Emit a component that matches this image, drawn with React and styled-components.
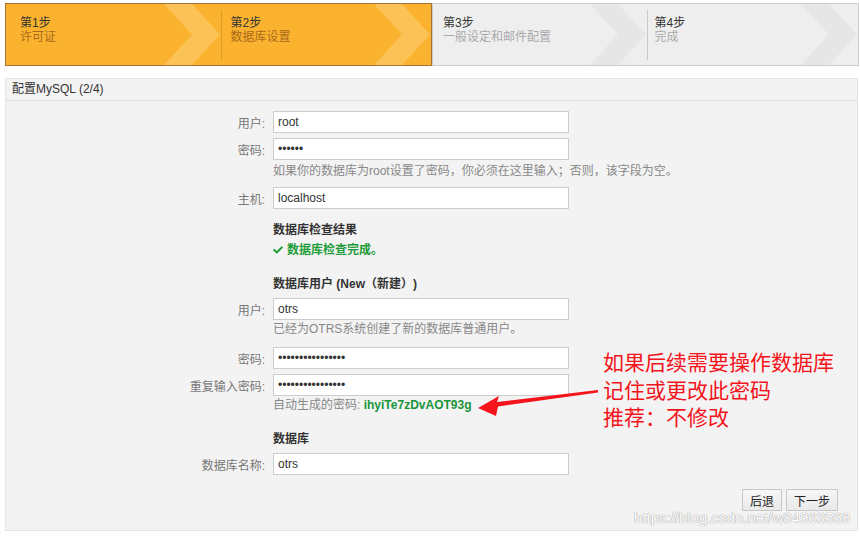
import React from "react";
import styled, { createGlobalStyle } from "styled-components";
import { FaCheck } from "react-icons/fa";

const GlobalStyle = createGlobalStyle`
  html, body {
    margin: 0;
    padding: 0;
    background: #fff;
  }
  body {
    font-family: "Liberation Sans", Arial, "Noto Sans CJK SC", sans-serif;
    font-size: 12px;
    color: #333;
    text-spacing-trim: space-all;
  }
`;

const steps = [
  { no: "第1步", name: "许可证", pad: 14 },
  { no: "第2步", name: "数据库设置", pad: 10, divider: true },
  { no: "第3步", name: "一般设定和邮件配置", pad: 10 },
  { no: "第4步", name: "完成", pad: 8, divider: true },
];

const Chevron = ({ color }) => (
  <ChevronSvg viewBox="0 0 56 61" preserveAspectRatio="none">
    <polygon points="0,0 28,0 56,30.5 28,61 0,61 28,30.5" fill={color} />
  </ChevronSvg>
);

const App = () => {
  const renderStep = (s, done) => (
    <Step key={s.no} $pad={s.pad} $divider={s.divider} $done={done}>
      <Chevron color={done ? "#fcc255" : "#e6e6e6"} />
      <StepNo>{s.no}</StepNo>
      <StepName $done={done}>{s.name}</StepName>
    </Step>
  );

  return (
    <Page>
      <GlobalStyle />
      <StepBar>
        <StepGroup $done>{steps.slice(0, 2).map((s) => renderStep(s, true))}</StepGroup>
        <StepGroup>{steps.slice(2).map((s) => renderStep(s, false))}</StepGroup>
      </StepBar>

      <Panel>
        <PanelHeader>配置MySQL (2/4)</PanelHeader>
        <PanelBody>
          <Row $mt={10}>
            <Label>用户:</Label>
            <Input readOnly value="root" />
          </Row>
          <Row $mt={5}>
            <Label>密码:</Label>
            <Input readOnly type="password" value="123456" />
          </Row>
          <Help $mt={3}>如果你的数据库为root设置了密码，你必须在这里输入；否则，该字段为空。</Help>
          <Row $mt={8}>
            <Label>主机:</Label>
            <Input readOnly value="localhost" />
          </Row>

          <Heading $mt={13}>数据库检查结果</Heading>
          <Success $mt={4}>
            <FaCheck size={10} />
            数据库检查完成。
          </Success>

          <Heading $mt={18}>数据库用户 (New（新建）)</Heading>
          <Row $mt={6}>
            <Label>用户:</Label>
            <Input readOnly value="otrs" />
          </Row>
          <Help $mt={1}>已经为OTRS系统创建了新的数据库普通用户。</Help>
          <Row $mt={10}>
            <Label>密码:</Label>
            <Input readOnly type="password" value="ihyiTe7zDvAOT93g" />
          </Row>
          <Row $mt={5}>
            <Label>重复输入密码:</Label>
            <Input readOnly type="password" value="ihyiTe7zDvAOT93g" />
          </Row>
          <Help $mt={1}>
            自动生成的密码: <Generated>ihyiTe7zDvAOT93g</Generated>
          </Help>

          <Heading $mt={18}>数据库</Heading>
          <Row $mt={6}>
            <Label>数据库名称:</Label>
            <Input readOnly value="otrs" />
          </Row>

          <Actions>
            <Button>后退</Button>
            <Button>下一步</Button>
          </Actions>
        </PanelBody>
        <Watermark>https://blog.csdn.net/w84963568</Watermark>
      </Panel>

      <Note>
        如果后续需要操作数据库
        <br />
        记住或更改此密码
        <br />
        推荐：不修改
      </Note>
      <ArrowSvg width="860" height="536" viewBox="0 0 860 536">
        <polygon
          points="478,408 499,396 497,402 598,390 598,392.5 498,406.5 496,416"
          fill="#f4141b"
        />
      </ArrowSvg>
    </Page>
  );
};

export default App;

const Page = styled.div`
  position: relative;
  width: 860px;
  height: 536px;
  overflow: hidden;
`;

const StepBar = styled.div`
  display: flex;
  height: 63px;
  margin: 3px 1px 0 5px;
`;

const StepGroup = styled.div`
  flex: 1;
  display: flex;
  background: ${(p) => (p.$done ? "#fbb32f" : "#eeeeee")};
  border: 1px solid ${(p) => (p.$done ? "#a3733a" : "#cccccc")};
`;

const Step = styled.div`
  position: relative;
  flex: 1;
  padding: 12px 0 0 ${(p) => p.$pad}px;

  &::before {
    content: "";
    display: ${(p) => (p.$divider ? "block" : "none")};
    position: absolute;
    left: 0;
    top: 6px;
    bottom: 5px;
    width: 1px;
    background: ${(p) => (p.$done ? "#dd9b27" : "#c9c9c9")};
  }
`;

const ChevronSvg = styled.svg`
  position: absolute;
  top: 0;
  right: 1px;
  width: 56px;
  height: 100%;
`;

const StepNo = styled.div`
  position: relative;
  line-height: 14px;
  color: #333;
`;

const StepName = styled.div`
  position: relative;
  line-height: 14px;
  color: ${(p) => (p.$done ? "#a9681a" : "#aaaaaa")};
`;

const Panel = styled.div`
  position: relative;
  margin: 12px 2px 0 5px;
  height: 453px;
  box-sizing: border-box;
  background: #f3f3f3;
  border: 1px solid #e6e6e6;
`;

const PanelHeader = styled.div`
  height: 21px;
  line-height: 21px;
  padding-left: 6px;
  border-bottom: 1px solid #dcdcdc;
  color: #333;
`;

const PanelBody = styled.div`
  display: flex;
  flex-direction: column;
`;

const Row = styled.div`
  display: grid;
  grid-template-columns: 259px 296px;
  column-gap: 8px;
  align-items: center;
  margin-top: ${(p) => p.$mt}px;
`;

const Label = styled.label`
  text-align: right;
  color: #777;
`;

const Input = styled.input`
  box-sizing: border-box;
  width: 296px;
  height: 22px;
  margin: 0;
  padding: 0 4px;
  border: 1px solid #cccccc;
  background: #fff;
  font-family: "Liberation Sans", Arial, "Noto Sans CJK SC", sans-serif;
  font-size: 12px;
  color: #333;
  outline: none;
`;

const Help = styled.div`
  margin: ${(p) => p.$mt}px 0 0 267px;
  line-height: 16px;
  color: #888;
`;

const Heading = styled.div`
  margin: ${(p) => p.$mt}px 0 0 267px;
  line-height: 16px;
  font-weight: bold;
  color: #333;
  text-spacing-trim: space-all;
`;

const Success = styled.div`
  display: flex;
  align-items: center;
  gap: 4px;
  margin: ${(p) => p.$mt}px 0 0 267px;
  line-height: 16px;
  font-weight: bold;
  color: #1e9c3a;
`;

const Generated = styled.span`
  font-weight: bold;
  color: #17953a;
`;

const Actions = styled.div`
  display: flex;
  justify-content: flex-end;
  gap: 4px;
  margin-top: 14px;
  padding-right: 19px;
`;

const Button = styled.button`
  height: 22px;
  padding: 0 7px;
  border: 1px solid #c8c8c8;
  background: linear-gradient(#f7f7f7, #e9e9e9);
  font-family: "Liberation Sans", Arial, "Noto Sans CJK SC", sans-serif;
  font-size: 12px;
  color: #222;
  cursor: pointer;
`;

const Watermark = styled.div`
  position: absolute;
  right: 7px;
  bottom: 4px;
  font-family: "Liberation Sans", Arial, sans-serif;
  font-size: 15px;
  color: #ffffff;
  text-shadow: 0 0 1px #9a9a9a, 0 0 1px #9a9a9a;
`;

const Note = styled.div`
  position: absolute;
  left: 603px;
  top: 348px;
  font-family: "Noto Sans CJK SC", sans-serif;
  font-size: 21px;
  line-height: 27.5px;
  color: #f4141b;
`;

const ArrowSvg = styled.svg`
  position: absolute;
  left: 0;
  top: 0;
  pointer-events: none;
`;
